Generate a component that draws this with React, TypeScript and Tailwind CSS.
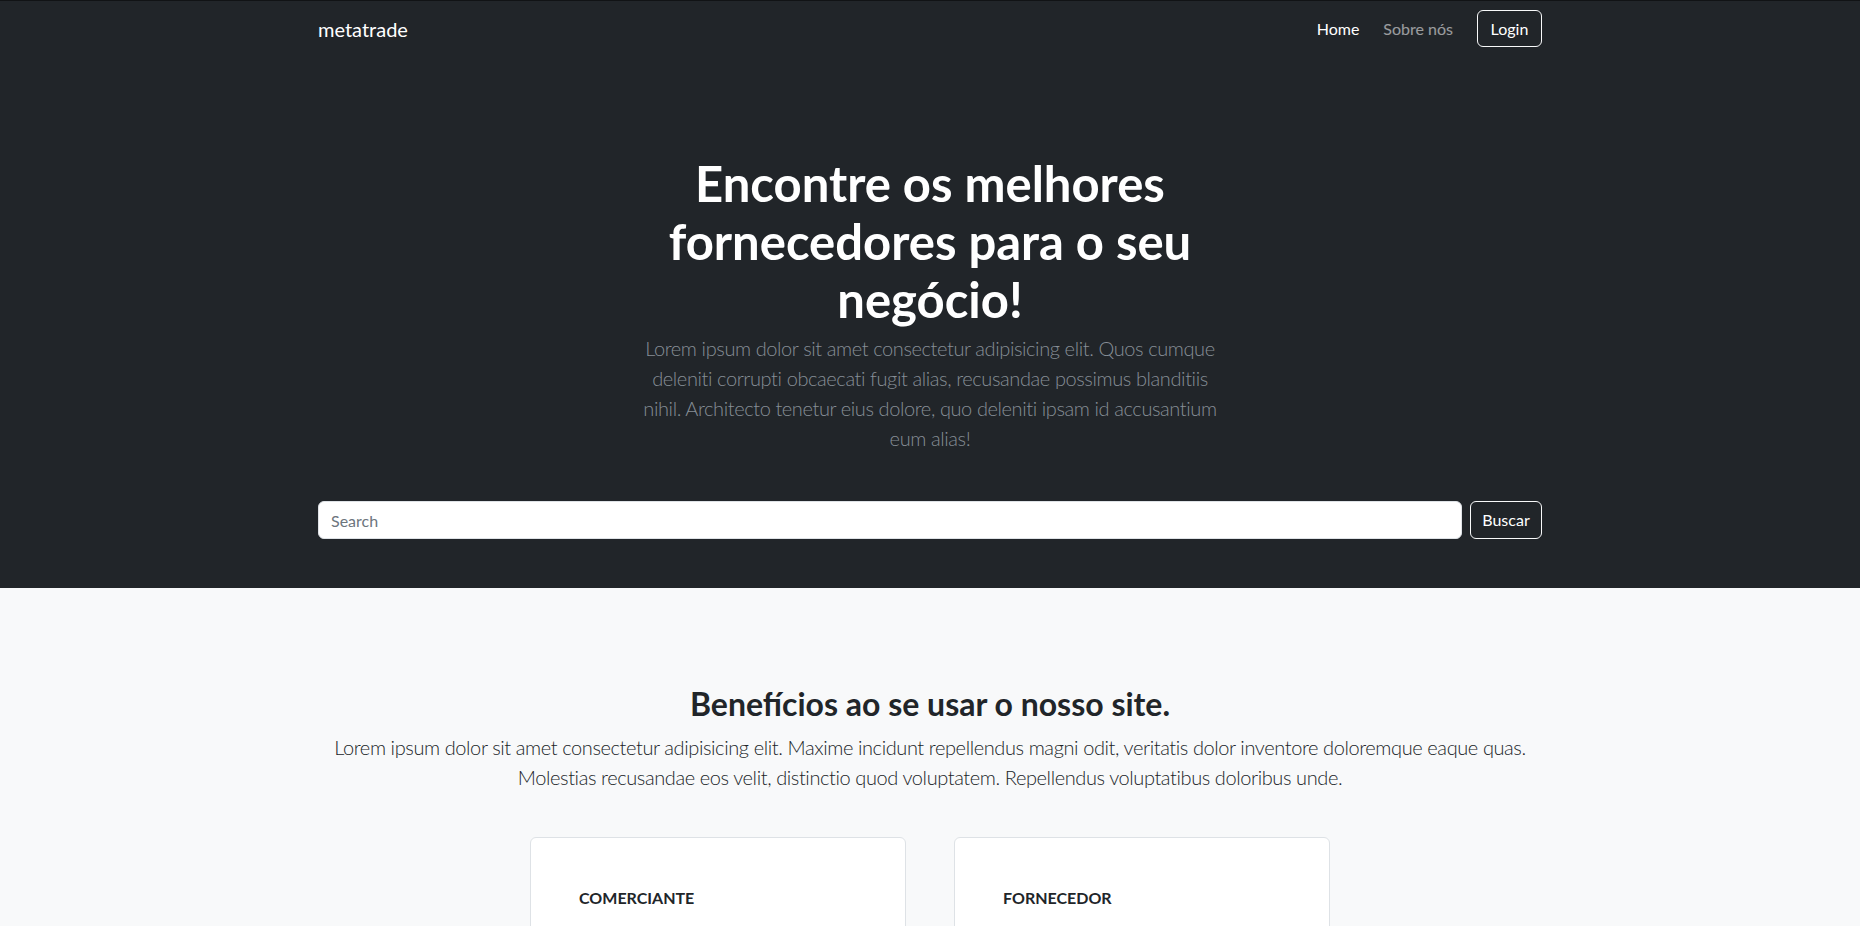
import { useState } from 'react';

const font = { fontFamily: 'Lato, "Open Sans", sans-serif' };

const Navbar = () => {
    return (
        <nav className="bg-[#212529] border-t border-[#111315]">
            <div className="w-[1224px] mx-auto h-[55px] flex items-center justify-between">
                <a href="#" className="text-[20px] text-white leading-none">
                    metatrade
                </a>
                <div className="flex items-center">
                    <a href="#" className="text-white text-[16px] mr-6">Home</a>
                    <a href="#" className="text-white/55 text-[16px] mr-[24px]">Sobre nós</a>
                    <button className="h-[37px] w-[65px] border border-[#f8f9fa] rounded-[6px] text-white text-[16px]">
                        Login
                    </button>
                </div>
            </div>
        </nav>
    );
};

const Hero = () => {
    const [query, setQuery] = useState('');

    return (
        <section className="bg-[#212529] pt-[99px] pb-[49px]">
            <div className="w-[1224px] mx-auto">
                <div className="w-[588px] mx-auto text-center">
                    <h1 className="text-[49px] leading-[1.18] font-bold text-white mb-[5px]">
                        Encontre os melhores fornecedores para o seu negócio!
                    </h1>
                    <p className="text-[20px] leading-[1.5] font-light tracking-[-0.02em] text-[#868e96]">
                        Lorem ipsum dolor sit amet consectetur adipisicing elit. Quos cumque deleniti corrupti obcaecati fugit alias, recusandae possimus blanditiis nihil. Architecto tenetur eius dolore, quo deleniti ipsam id accusantium eum alias!
                    </p>
                </div>
                <form className="flex gap-2 mt-[48px]" onSubmit={(e) => e.preventDefault()}>
                    <input
                        type="search"
                        placeholder="Search"
                        value={query}
                        onChange={(e) => setQuery(e.target.value)}
                        className="flex-1 h-[38px] px-3 bg-white rounded-[6px] border border-[#dee2e6] text-[16px] text-[#212529] placeholder:text-[#6c757d] outline-none"
                    />
                    <button className="h-[38px] w-[72px] border border-[#f8f9fa] rounded-[6px] text-white text-[16px]">
                        Buscar
                    </button>
                </form>
            </div>
        </section>
    );
};

const Benefits = () => {
    const cards = ['COMERCIANTE', 'FORNECEDOR'];

    return (
        <section className="bg-[#f8f9fa] pt-[97px] pb-12">
            <div className="w-[1224px] mx-auto text-center">
                <h2 className="text-[32px] leading-[1.2] font-bold text-[#212529] mb-2">
                    Benefícios ao se usar o nosso site.
                </h2>
                <p className="text-[20px] leading-[1.5] font-light tracking-[-0.02em] text-[#212529]">
                    Lorem ipsum dolor sit amet consectetur adipisicing elit. Maxime incidunt repellendus magni odit, veritatis dolor inventore doloremque eaque quas. Molestias recusandae eos velit, distinctio quod voluptatem. Repellendus voluptatibus doloribus unde.
                </p>
            </div>
            <div className="flex justify-center gap-12 mt-[45px]">
                {cards.map((title) => (
                    <div key={title} className="w-[376px] h-[260px] bg-white border border-[#dee2e6] rounded-[6px] p-12 text-left">
                        <h6 className="text-[16px] leading-[1.5] font-bold text-[#212529]">{title}</h6>
                    </div>
                ))}
            </div>
        </section>
    );
};

export default function App() {
    return (
        <div style={font} className="min-h-screen bg-[#f8f9fa]">
            <Navbar />
            <Hero />
            <Benefits />
        </div>
    );
}
